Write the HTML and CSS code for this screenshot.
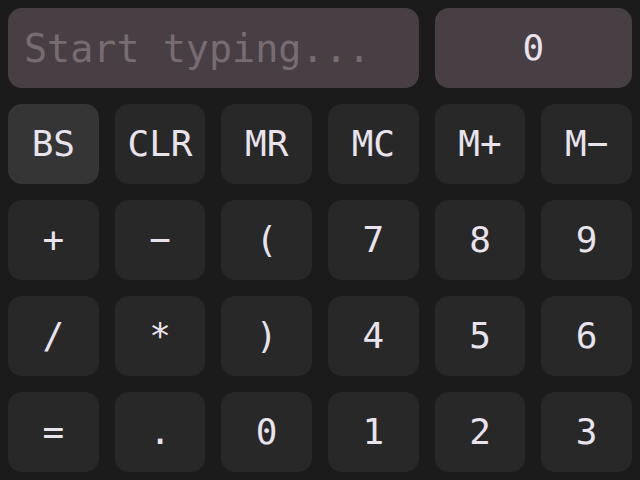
FILE: index.html
```html
<!DOCTYPE html>
<html>
<head>
<meta charset="utf-8">
<link rel="stylesheet" href="styles.css">
</head>
<body>
<div class="calc">
  <input class="entry" type="text" placeholder="Start typing...">
  <div class="display">0</div>
  <button class="key active">BS</button>
  <button class="key">CLR</button>
  <button class="key">MR</button>
  <button class="key">MC</button>
  <button class="key">M+</button>
  <button class="key">M−</button>
  <button class="key">+</button>
  <button class="key">−</button>
  <button class="key">(</button>
  <button class="key">7</button>
  <button class="key">8</button>
  <button class="key">9</button>
  <button class="key">/</button>
  <button class="key">*</button>
  <button class="key">)</button>
  <button class="key">4</button>
  <button class="key">5</button>
  <button class="key">6</button>
  <button class="key">=</button>
  <button class="key">.</button>
  <button class="key">0</button>
  <button class="key">1</button>
  <button class="key">2</button>
  <button class="key">3</button>
</div>
</body>
</html>
```

FILE: styles.css
```css
html, body {
  margin: 0;
  padding: 0;
  background: #1b1b1b;
  width: 640px;
  height: 480px;
  overflow: hidden;
}
.calc {
  box-sizing: border-box;
  width: 640px;
  height: 480px;
  padding: 8px;
  display: grid;
  grid-template-columns: repeat(6, 1fr);
  grid-template-rows: repeat(5, 80px);
  gap: 16px;
  font-family: "DejaVu Sans Mono", monospace;
  font-size: 36px;
  color: #e8e3ec;
}
.entry {
  grid-column: span 4;
  box-sizing: border-box;
  width: 100%;
  height: 80px;
  border: none;
  outline: none;
  border-radius: 14px;
  background: #483f45;
  color: #e8e3ec;
  font-family: inherit;
  font-size: 38.4px;
  padding: 0 16px;
  margin: 0;
}
.entry::placeholder {
  color: #776c72;
}
.display {
  grid-column: span 2;
  border-radius: 14px;
  background: #483f45;
  display: flex;
  align-items: center;
  justify-content: center;
  padding-bottom: 2px;
}
.key {
  border: none;
  margin: 0;
  padding: 0 0 2px 0;
  border-radius: 14px;
  background: #282828;
  color: #e8e3ec;
  font-family: inherit;
  font-size: 36px;
  display: flex;
  align-items: center;
  justify-content: center;
}
.key.active {
  background: #353535;
}
```
